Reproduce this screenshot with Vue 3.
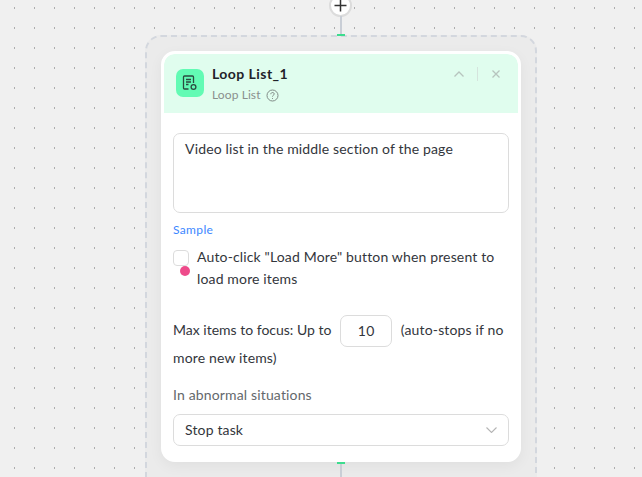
<script setup>
const title = 'Loop List_1'
</script>

<template>
  <div class="canvas">
    <div class="add">
      <svg width="13" height="13" viewBox="0 0 13 13"><path d="M6.5 0.5V12.5M0.5 6.5H12.5" stroke="#333" stroke-width="1.5" fill="none"/></svg>
    </div>
    <div class="wire wire-top"></div>
    <div class="port port-top"></div>
    <div class="group">
      <div class="card">
        <header class="head">
          <div class="icon">
            <svg width="16" height="16" viewBox="0 0 16 16" fill="none" stroke="#2b4a40" stroke-width="1.3">
              <path d="M6.5 14H2.5C2 14 1.5 13.5 1.5 13V2C1.5 1.5 2 1 2.5 1H10.5C11 1 11.5 1.5 11.5 2V8"/>
              <path d="M4 4.5H9M4 7H9M4 9.5H6.5"/>
              <circle cx="11.5" cy="12" r="2.4"/>
            </svg>
          </div>
          <div class="names">
            <div class="title">{{ title }}</div>
            <div class="sub">Loop List
              <svg width="13" height="13" viewBox="0 0 13 13" fill="none" stroke="#7f8a86" stroke-width="1">
                <circle cx="6.5" cy="6.5" r="5.5"/>
                <path d="M4.8 5.2C4.8 3 8.2 3 8.2 5C8.2 6.3 6.5 6.2 6.5 7.6"/>
                <path d="M6.5 9V9.9"/>
              </svg>
            </div>
          </div>
          <div class="tools">
            <svg width="10" height="6" viewBox="0 0 10 6" fill="none" stroke="#b7c4be" stroke-width="1.3"><path d="M0.5 5.5L5 1L9.5 5.5"/></svg>
            <span class="sep"></span>
            <svg class="close" width="8" height="8" viewBox="0 0 8 8" fill="none" stroke="#b7c4be" stroke-width="1.3"><path d="M0.5 0.5L7.5 7.5M7.5 0.5L0.5 7.5"/></svg>
          </div>
        </header>
        <div class="body">
          <div class="area">Video list in the middle section of the page</div>
          <a class="sample">Sample</a>
          <div class="check">
            <span class="box"></span>
            <span class="dot"></span>
            <span class="label">Auto-click "Load More" button when present to load more items</span>
          </div>
          <div class="max"><span class="lead">Max items to focus: Up to</span> <span class="num">10</span> (auto-stops if no more new items)</div>
          <div class="abn">In abnormal situations</div>
          <div class="select">
            <span>Stop task</span>
            <svg width="11" height="6" viewBox="0 0 11 6" fill="none" stroke="#b5b5b5" stroke-width="1.1"><path d="M0.5 0.5L5.5 5.5L10.5 0.5"/></svg>
          </div>
        </div>
      </div>
    </div>
    <div class="port port-bottom"></div>
    <div class="wire wire-bottom"></div>
  </div>
</template>

<style scoped>
.canvas {
  position: relative;
  width: 642px;
  height: 477px;
  overflow: hidden;
  background-color: #f0f0f0;
  background-image: radial-gradient(ellipse 0.8px 1.1px at 0.5px 1px, #adadad 100%, transparent 100%);
  background-size: 20px 20px;
  background-position: 14px 7px;
  font-family: Lato, "Noto Sans", sans-serif;
  color: #33363c;
  font-size: 14px;
  letter-spacing: 0.15px;
}
.add {
  position: absolute;
  left: 329px;
  top: -6px;
  width: 23px;
  height: 23px;
  box-sizing: border-box;
  border: 2px solid #dcdcdc;
  border-radius: 50%;
  background: #fff;
  display: flex;
  align-items: center;
  justify-content: center;
}
.wire {
  position: absolute;
  left: 340px;
  width: 2px;
  background: #c9ced6;
}
.wire-top { top: 16px; height: 19px; }
.wire-bottom { top: 464px; height: 13px; }
.port {
  position: absolute;
  left: 337px;
  width: 8px;
  height: 2px;
  background: #3ddc8e;
  z-index: 2;
}
.port-top { top: 34px; }
.port-bottom { top: 462px; }
.group {
  position: absolute;
  left: 145px;
  top: 35px;
  width: 392px;
  height: 470px;
  box-sizing: border-box;
  border: 2px dashed #d3d7de;
  border-radius: 16px;
  background: #ebebeb;
  padding: 14px 14px;
}
.card {
  width: 360px;
  height: 411px;
  box-sizing: border-box;
  border: 3px solid #fff;
  border-radius: 14px;
  background: #fff;
  box-shadow: 0 4px 14px rgba(0, 0, 0, 0.05);
  overflow: hidden;
}
.head {
  height: 59px;
  box-sizing: border-box;
  background: #e0fdee;
  border-radius: 10px 10px 0 0;
  display: flex;
  align-items: flex-start;
  padding: 15px 18px 0 12px;
}
.icon {
  width: 28px;
  height: 28px;
  border-radius: 7px;
  background: #62fbb4;
  display: flex;
  align-items: center;
  justify-content: center;
}
.names { margin-left: 8px; flex: 1; margin-top: -5px; }
.title {
  font-weight: 700;
  font-size: 14px;
  line-height: 20px;
  letter-spacing: 0.45px;
  color: #1f2329;
}
.sub {
  margin-top: 3px;
  display: flex;
  align-items: center;
  gap: 5px;
  font-size: 12px;
  line-height: 16px;
  letter-spacing: 0.1px;
  color: #8a8f8d;
}
.tools {
  display: flex;
  align-items: center;
  gap: 13px;
  margin-top: -2px;
}
.close { margin-left: 1px; }
.sep {
  width: 1px;
  height: 14px;
  background: #d5e4dd;
}
.body { padding: 20px 9px 0 9px; }
.area {
  height: 80px;
  box-sizing: border-box;
  border: 1px solid #dcdcdc;
  border-radius: 7px;
  padding: 5px 11px;
  line-height: 20px;
}
.sample {
  display: block;
  margin-top: 9px;
  font-size: 12px;
  line-height: 16px;
  letter-spacing: 0.35px;
  color: #3d87ff;
}
.check {
  position: relative;
  display: flex;
  gap: 8px;
  margin-top: 8px;
}
.box {
  flex: none;
  width: 16px;
  height: 16px;
  box-sizing: border-box;
  margin-top: 4px;
  border: 1px solid #dcdcdc;
  border-radius: 4px;
}
.dot {
  position: absolute;
  left: 7px;
  top: 20px;
  width: 10px;
  height: 10px;
  border-radius: 50%;
  background: #ee4b8b;
}
.label { line-height: 22px; }
.max {
  margin-top: 25px;
  line-height: 22px;
}
.lead { letter-spacing: 0; }
.num {
  display: inline-block;
  vertical-align: middle;
  width: 52px;
  height: 32px;
  margin: 0 5px;
  box-sizing: border-box;
  border: 1px solid #dcdcdc;
  border-radius: 7px;
  text-align: center;
  line-height: 30px;
}
.abn {
  margin-top: 16px;
  line-height: 20px;
  color: #64686c;
}
.select {
  margin-top: 9px;
  height: 32px;
  box-sizing: border-box;
  border: 1px solid #dcdcdc;
  border-radius: 7px;
  padding: 0 11px 1px;
  display: flex;
  align-items: center;
  justify-content: space-between;
}
</style>
